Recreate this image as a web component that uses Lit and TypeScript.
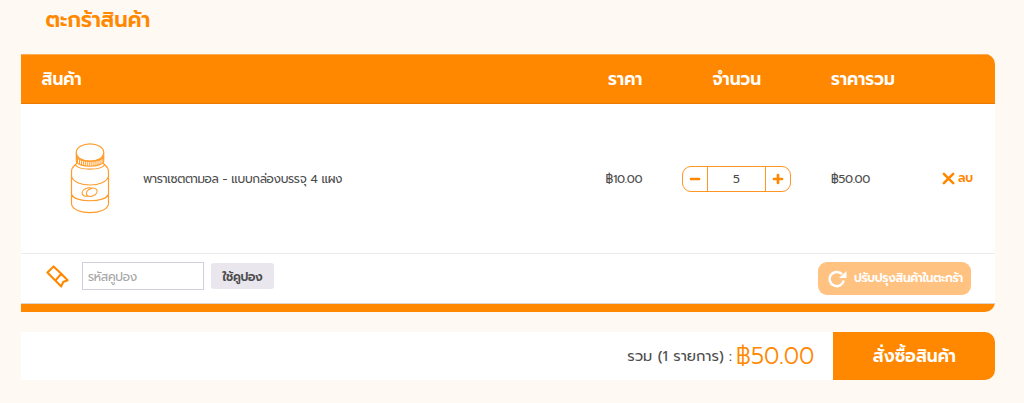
import { LitElement, html, css, svg } from "lit";
import { customElement, state } from "lit/decorators.js";

const ribs = Array.from({ length: 13 }, (_, i) => {
  const x = 7.5 + i * 2.05;
  const t = (x - 20) / 14;
  const y = 18 + 5 * Math.sqrt(Math.max(0, 1 - t * t));
  return svg`<path d="M${x} ${y - 4.5}v4.5" />`;
});

@customElement("app-root")
export class AppRoot extends LitElement {
  @state() private quantity = 5;

  static styles = css`
    :host { display: block; height: 403px; overflow: hidden; background: #fef9f3; color: #4d4d4d;
      font-family: Prompt, Inter, "Noto Sans Thai", "Noto Sans", sans-serif; font-size: 12px; }
    * { box-sizing: border-box; }
    svg { display: block; flex: none; }
    button { font: inherit; border: 0; padding: 0; margin: 0; color: inherit; background: none; white-space: nowrap; }
    .page { padding: 0 28.6px 0 21px; white-space: nowrap; }
    h1 { margin: 0; height: 54px; padding: 6px 0 0 24.5px; font-size: 21.1px; line-height: 28px; font-weight: 600; color: #ff8800; }
    .table { border-radius: 0 10px 10px 0; overflow: hidden; background: #fff; height: 258px; }
    .row { display: grid; grid-template-columns: 50px 72px 462.6px 76.4px 149px 111px 1fr; align-items: center; }
    .head { height: 50px; background: #ff8800; border-top: 1px solid #ffad55; border-bottom: 1px solid #e87b00; color: #fff; font-size: 17.1px; font-weight: 600; }
    .title { grid-column: 1 / 4; padding-left: 20.5px; }
    .head .price { padding-left: 2.5px; }
    .head .qty { padding-left: 30.5px; }
    .item { height: 149px; }
    .text { padding-top: 1px; letter-spacing: -0.34px; }
    .bottle { grid-column: 1 / 3; padding-left: 49px; }
    .stepper { display: grid; grid-template-columns: 24px 1fr 24px; width: 109px; height: 26px; border: 1px solid #ff9522; border-radius: 9px; }
    .stepper > * { display: flex; align-items: center; justify-content: center; }
    .value { border: solid #ff9522; border-width: 0 1px; }
    .remove { display: flex; align-items: center; gap: 3px; color: #ff8800; font-weight: 600; padding-bottom: 1px; letter-spacing: -0.33px; }
    .coupon { height: 50px; border-top: 1px solid #ececec; display: flex; align-items: center; padding: 0 24px 5px 25px; letter-spacing: -0.33px; }
    .field { width: 122px; height: 28px; margin-left: 13px; padding: 1px 5px 0; border: 1px solid #d2cfde; display: flex; align-items: center; color: #a5a5a5; }
    .apply { width: 63px; height: 26px; margin-left: 7px; padding-top: 1px; border-radius: 3px; background: #e9e6ed; font-weight: 600; letter-spacing: -0.33px; }
    .update { width: 153.5px; height: 33px; margin: 5px 0 0 auto; border-radius: 9px; background: #ffc280; color: #fff; font-weight: 600; display: flex; align-items: center; padding-left: 10.5px; gap: 6.5px; letter-spacing: -0.33px; }
    .update span { padding-bottom: 1px; }
    .foot { height: 9px; background: #ff8800; border-top: 1px solid #ddd5cf; }
    .summary { margin-top: 20px; height: 48px; background: #fff; border-radius: 0 10px 10px 0; overflow: hidden; display: flex; align-items: center; justify-content: flex-end; }
    .count { font-size: 14.6px; margin-right: 4px; }
    .sum { color: #ff8800; font-size: 23.2px; font-weight: 300; margin-right: 19px; }
    .order { width: 162px; height: 48px; background: #ff8800; color: #fff; font-weight: 600; font-size: 17.1px; }
  `;

  render() {
    return html`<div class="page">
      <h1>ตะกร้าสินค้า</h1>
      <div class="table">
        <div class="row head">
          <div class="title">สินค้า</div>
          <div class="price">ราคา</div>
          <div class="qty">จำนวน</div>
          <div>ราคารวม</div>
        </div>
        <div class="row item">
          <div class="bottle">
            <svg width="40" height="71" viewBox="0 0 40 71" fill="none" stroke="#ff9c2b" stroke-width="1.2">
              <ellipse cx="20" cy="9.5" rx="13.7" ry="8.7" />
              <path d="M6.3 10v8c1 7 26.400 7 27.400 0v-8M6.300 13c2 7 25.400 7 27.400 0M7 19.500c-1 3-5.500 3.500-5.500 9V61c1.500 11.500 35.500 11.500 37 0V28.500c0-5.500-4.500-6-5.500-9M5.500 22c4 5.500 25 5.500 29 0M1.500 33c2 12 35 12 37 0M1.500 51c2 9 35 9 37 0" />
              <ellipse cx="17.500" cy="49" rx="5.600" ry="3.800" transform="rotate(-24 17.500 49)" />
              <ellipse cx="21.700" cy="49.300" rx="5.600" ry="3.800" fill="#fff" transform="rotate(-24 21.700 49.300)" />
              <g stroke-width="1">${ribs}</g>
            </svg>
          </div>
          <div class="text">พาราเซตตามอล - แบบกล่องบรรจุ 4 แผง</div>
          <div class="text">฿10.00</div>
          <div class="stepper">
            <button @click=${() => (this.quantity = Math.max(1, this.quantity - 1))}>
              <svg width="12" height="12" viewBox="0 0 12 12" stroke="#ff8800" stroke-width="2.7" stroke-linecap="round"><path d="M2 6h8" /></svg>
            </button>
            <div class="value">${this.quantity}</div>
            <button @click=${() => this.quantity++}>
              <svg width="12" height="12" viewBox="0 0 12 12" stroke="#ff8800" stroke-width="2.7" stroke-linecap="round"><path d="M2 6h8M6 2v8" /></svg>
            </button>
          </div>
          <div class="text">฿50.00</div>
          <button class="remove">
            <svg width="13" height="13" viewBox="0 0 14 14" stroke="#ff8800" stroke-width="2.8" stroke-linecap="round"><path d="M2 2l10 10M12 2L2 12" /></svg>
            <span>ลบ</span>
          </button>
        </div>
        <div class="coupon">
          <svg width="23" height="23" viewBox="0 0 23 23" fill="none" stroke="#ff8800" stroke-width="2.1" stroke-linejoin="round">
            <path d="M7.600 1.400L1.400 7.500 9.300 15.600 15.200 21.400 17.200 17 21.600 15.200 15.300 8.700ZM15.300 8.700L9.300 15.600" />
          </svg>
          <div class="field">รหัสคูปอง</div>
          <button class="apply">ใช้คูปอง</button>
          <button class="update">
            <svg width="19" height="19" viewBox="0 0 19 19" fill="none" stroke="#fff" stroke-width="2.5"><path d="M14 5.200A7.100 7.100 0 1 0 15.700 11.500" /><path d="M18.500 2v7h-7.500z" fill="#fff" stroke="none" /></svg>
            <span>ปรับปรุงสินค้าในตะกร้า</span>
          </button>
        </div>
        <div class="foot"></div>
      </div>
      <div class="summary">
        <span class="count">รวม (1 รายการ) :</span>
        <span class="sum">฿50.00</span>
        <button class="order">สั่งซื้อสินค้า</button>
      </div>
    </div>`;
  }
}
